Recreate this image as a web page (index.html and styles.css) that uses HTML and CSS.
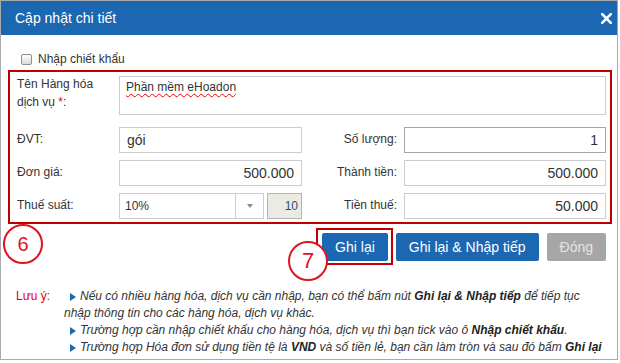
FILE: index.html
```html
<!DOCTYPE html>
<html lang="vi">
<head>
<meta charset="utf-8">
<title>Cập nhật chi tiết</title>
<link rel="stylesheet" href="styles.css">
</head>
<body>
<div class="dialog">
  <div class="dlg-head">
    <span class="dlg-title">Cập nhật chi tiết</span>
    <svg class="close" width="11" height="11" viewBox="0 0 11 11"><path d="M1.2 1.2 L9.8 9.8 M9.8 1.2 L1.2 9.8" stroke="#fff" stroke-width="2.6" stroke-linecap="square"/></svg>
  </div>
  <div class="dlg-body">
    <div class="chk-row"><span class="chk"></span>Nhập chiết khẩu</div>
    <div class="form-box">
      <div class="lbl lbl-top">Tên Hàng hóa<br>dịch vụ <span class="req">*</span>:</div>
      <div class="field area"><span class="spell">Phần mềm eHoadon</span></div>

      <div class="lbl">ĐVT:</div>
      <div class="field">gói</div>
      <div class="lbl lbl-r">Số lượng:</div>
      <div class="field num focus">1</div>

      <div class="lbl">Đơn giá:</div>
      <div class="field num">500.000</div>
      <div class="lbl lbl-r">Thành tiền:</div>
      <div class="field num">500.000</div>

      <div class="lbl">Thuế suất:</div>
      <div class="tax">
        <div class="select"><span class="sel-val">10%</span><span class="caret-box"><i class="caret"></i></span></div>
        <div class="field ro">10</div>
      </div>
      <div class="lbl lbl-r">Tiền thuế:</div>
      <div class="field num">50.000</div>
    </div>
    <div class="actions">
      <button class="btn">Ghi lại</button>
      <button class="btn">Ghi lại &amp; Nhập tiếp</button>
      <button class="btn btn-off">Đóng</button>
    </div>
    <div class="notes">
      <div class="notes-label">Lưu ý:</div>
      <div class="notes-body">
        <p><i class="tri"></i>Nếu có nhiều hàng hóa, dịch vụ cần nhập, bạn có thể bấm nút <b>Ghi lại &amp; Nhập tiếp</b> để tiếp tục<br>nhập thông tin cho các hàng hóa, dịch vụ khác.</p>
        <p><i class="tri"></i>Trường hợp cần nhập chiết khấu cho hàng hóa, dịch vụ thì bạn tick vào ô <b>Nhập chiết khấu</b>.</p>
        <p><i class="tri"></i>Trường hợp Hóa đơn sử dụng tiền tệ là <b>VND</b> và số tiền lẻ, bạn cần làm tròn và sau đó bấm <b>Ghi lại</b></p>
      </div>
    </div>
  </div>
</div>

<div class="hl-box"></div>
<div class="badge badge-6">6</div>
<div class="badge badge-7">7</div>
</body>
</html>
```

FILE: styles.css
```css
html, body {
  margin: 0;
  padding: 0;
  background: #fff;
}
body {
  position: relative;
  width: 620px;
  height: 363px;
  overflow: hidden;
  font-family: "Liberation Sans", Arial, sans-serif;
  color: #333;
}
.dialog {
  width: 618px;
  height: 360px;
  box-sizing: border-box;
  border: 1px solid #a9a9a9;
  background: #fff;
}
.dlg-head {
  height: 34px;
  background: #1b67b1;
  display: flex;
  align-items: center;
  justify-content: space-between;
  padding: 0 5px 0 14px;
  color: #fff;
}
.dlg-title {
  font-size: 14px;
}
.close {
  display: block;
}
.chk-row {
  display: flex;
  align-items: center;
  height: 18px;
  margin: 15px 0 2px 20px;
  font-size: 12px;
  color: #333;
}
.chk {
  width: 11px;
  height: 11px;
  box-sizing: border-box;
  border: 1px solid #8f8f8f;
  border-radius: 2px;
  background: linear-gradient(#fdfdfd, #dadada);
  margin-right: 6px;
}
.form-box {
  margin: 0 5px 0 7px;
  border: 2px solid #c00000;
  padding: 4px 4px 3px 7px;
  display: grid;
  grid-template-columns: 102px 183px 102px 202px;
  row-gap: 7px;
}
.lbl {
  font-size: 12px;
  line-height: 17.5px;
  align-self: center;
  color: #333;
}
.lbl-top {
  align-self: start;
}
.lbl-r {
  text-align: right;
  padding-right: 7px;
}
.req {
  color: #e00;
}
.field {
  height: 26px;
  box-sizing: border-box;
  border: 1px solid #ccc;
  background: #fff;
  display: flex;
  align-items: center;
  padding: 0 7px;
  font-size: 14px;
  color: #333;
}
.field.num {
  justify-content: flex-end;
}
.field.focus {
  border-color: #a6a6a6;
}
.field.area {
  grid-column: 2 / 5;
  height: 39px;
  margin-bottom: 5px;
  align-items: flex-start;
  padding: 2px 6px;
  font-size: 12px;
  line-height: 17px;
}
.spell {
  text-decoration: underline wavy #e00;
  text-decoration-thickness: 1px;
  text-underline-offset: 2px;
}
.tax {
  display: flex;
  gap: 3px;
}
.select {
  width: 145px;
  height: 26px;
  box-sizing: border-box;
  border: 1px solid #ccc;
  display: flex;
  align-items: center;
  font-size: 12px;
  color: #333;
}
.sel-val {
  flex: 1;
  padding-left: 5px;
}
.caret-box {
  width: 27px;
  height: 100%;
  border-left: 1px solid #ccc;
  display: flex;
  align-items: center;
  justify-content: center;
}
.caret {
  width: 0;
  height: 0;
  border-top: 4px solid #8a8a8a;
  border-left: 3.5px solid transparent;
  border-right: 3.5px solid transparent;
}
.field.ro {
  width: 35px;
  background: #ebebe4;
  border-color: #b5b5b5;
  justify-content: flex-end;
  padding: 0 3px;
  font-size: 12px;
  color: #2b4f7a;
}
.actions {
  display: flex;
  justify-content: flex-end;
  gap: 8px;
  margin-top: 9px;
  padding-right: 11px;
}
.btn {
  height: 28px;
  padding: 0 13px;
  font-family: "Liberation Sans", Arial, sans-serif;
  font-size: 14px;
  border: none;
  border-radius: 2px;
  background: #1b67b1;
  color: #fff;
}
.btn-off {
  background: #a6a6a6;
  color: #e4e4e4;
}
.notes {
  display: flex;
  margin: 27px 0 0 15px;
  font-size: 12px;
  line-height: 17px;
}
.notes-label {
  width: 48px;
  flex: none;
  color: #e5000b;
}
.notes-body {
  font-style: italic;
  color: #333;
  white-space: nowrap;
}
.notes-body p {
  margin: 0;
  text-indent: 6px;
}
.notes-body b {
  color: #222;
}
.tri {
  display: inline-block;
  width: 0;
  height: 0;
  border-left: 6px solid #1b67b1;
  border-top: 4px solid transparent;
  border-bottom: 4px solid transparent;
  margin-right: 4px;
  vertical-align: -1px;
}
.hl-box {
  position: absolute;
  left: 316px;
  top: 228px;
  width: 77px;
  height: 37px;
  box-sizing: border-box;
  border: 2px solid #c00000;
}
.badge {
  position: absolute;
  box-sizing: border-box;
  border: 2px solid #e0141e;
  border-radius: 50%;
  background: #fff;
  color: #e0141e;
  display: flex;
  align-items: center;
  justify-content: center;
  font-family: "Liberation Sans", Arial, sans-serif;
}
.badge-6 {
  left: 3px;
  top: 224px;
  width: 40px;
  height: 40px;
  font-size: 20px;
}
.badge-7 {
  left: 288px;
  top: 241px;
  width: 40px;
  height: 40px;
  font-size: 22px;
}
```
